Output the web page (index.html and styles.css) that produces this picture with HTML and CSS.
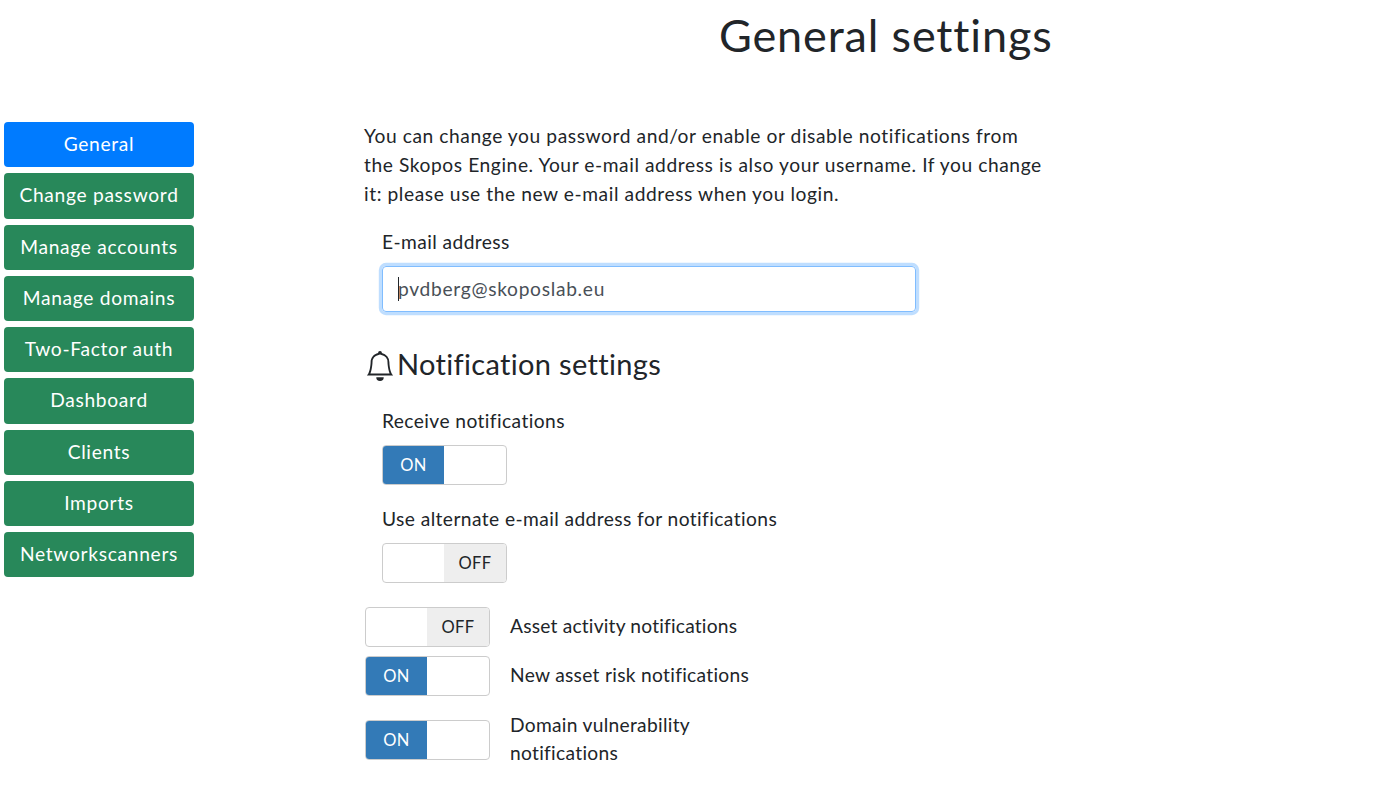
FILE: index.html
```html
<!DOCTYPE html>
<html lang="en">
<head>
    <meta charset="UTF-8">
    <meta name="viewport" content="width=device-width, initial-scale=1.0">
    <title>General settings</title>
    <link rel="stylesheet" href="styles.css">
</head>
<body>
    <h1 class="page-title">General settings</h1>
    <div class="layout">
        <nav class="side-nav">
            <a class="nav-btn active">General</a>
            <a class="nav-btn">Change password</a>
            <a class="nav-btn">Manage accounts</a>
            <a class="nav-btn">Manage domains</a>
            <a class="nav-btn">Two-Factor auth</a>
            <a class="nav-btn">Dashboard</a>
            <a class="nav-btn">Clients</a>
            <a class="nav-btn">Imports</a>
            <a class="nav-btn">Networkscanners</a>
        </nav>
        <main class="content">
            <p class="intro">You can change you password and/or enable or disable notifications from the Skopos Engine. Your e-mail address is also your username. If you change it: please use the new e-mail address when you login.</p>
            <div class="field">
                <label class="field-label">E-mail address</label>
                <div class="email-input"><span class="caret"></span>pvdberg@skoposlab.eu</div>
            </div>
            <h2 class="section-title">
                <svg class="bell" width="30" height="30" viewBox="0 0 16 16" fill="#212529">
                    <path d="M8 16a2 2 0 0 0 2-2H6a2 2 0 0 0 2 2z"/>
                    <path fill-rule="evenodd" d="M8 1.918l-.797.161A4.002 4.002 0 0 0 4 6c0 .628-.134 2.197-.459 3.742-.16.767-.376 1.566-.663 2.258h10.244c-.287-.692-.502-1.49-.663-2.258C12.134 8.197 12 6.628 12 6a4.002 4.002 0 0 0-3.203-3.92L8 1.917zM14.22 12c.223.447.481.801.78 1H1c.299-.199.557-.553.78-1C2.68 10.2 3 6.88 3 6c0-2.42 1.72-4.44 4.005-4.901a1 1 0 1 1 1.99 0A5.002 5.002 0 0 1 13 6c0 .88.32 4.2 1.22 6z"/>
                </svg>
                Notification settings
            </h2>
            <div class="field toggle-field first">
                <label class="field-label">Receive notifications</label>
                <div class="toggle"><span class="toggle-on">ON</span><span class="toggle-blank"></span></div>
            </div>
            <div class="field toggle-field second">
                <label class="field-label">Use alternate e-mail address for notifications</label>
                <div class="toggle"><span class="toggle-blank"></span><span class="toggle-off">OFF</span></div>
            </div>
            <div class="toggle-row row-asset">
                <div class="toggle"><span class="toggle-blank"></span><span class="toggle-off">OFF</span></div>
                <span class="row-label">Asset activity notifications</span>
            </div>
            <div class="toggle-row row-risk">
                <div class="toggle"><span class="toggle-on">ON</span><span class="toggle-blank"></span></div>
                <span class="row-label">New asset risk notifications</span>
            </div>
            <div class="toggle-row row-domain">
                <div class="toggle"><span class="toggle-on">ON</span><span class="toggle-blank"></span></div>
                <span class="row-label narrow">Domain vulnerability notifications</span>
            </div>
        </main>
    </div>
</body>
</html>
```

FILE: styles.css
```css
* {
    box-sizing: border-box;
}
body {
    font-family: 'Lato', 'Noto Sans', sans-serif;
    font-size: 19.2px;
    line-height: 29px;
    color: #212529;
    background: #fff;
    margin: 0;
}
.page-title {
    font-size: 45px;
    font-weight: 400;
    letter-spacing: 0.85px;
    line-height: 54px;
    margin: 0;
    padding: 8px 0 0 719px;
}
.layout {
    display: flex;
    margin-top: 60px;
    padding-left: 4px;
}
.side-nav {
    width: 190px;
    display: flex;
    flex-direction: column;
    gap: 6px;
    flex-shrink: 0;
}
.nav-btn {
    height: 45.25px;
    display: flex;
    align-items: center;
    justify-content: center;
    padding-bottom: 2px;
    background: #28885a;
    color: #fff;
    letter-spacing: 0.7px;
    border-radius: 4px;
}
.nav-btn.active {
    background: #007bff;
}
.content {
    margin-left: 170px;
    width: 680px;
    margin-top: -1px;
}
.intro {
    margin: 0;
    letter-spacing: 0.58px;
}
.field {
    margin: 19px 0 0 18px;
    letter-spacing: 0.42px;
}
.field-label {
    display: block;
    margin-bottom: 10px;
    line-height: 29px;
}
.email-input {
    width: 534px;
    height: 46px;
    border: 1px solid #80bdff;
    border-radius: 4px;
    box-shadow: 0 0 0 3.2px #bfdeff;
    padding: 0 15px;
    line-height: 44px;
    color: #495057;
    letter-spacing: 0.7px;
    position: relative;
}
.caret {
    position: absolute;
    left: 15px;
    top: 10px;
    width: 1px;
    height: 24px;
    background: #212529;
}
.section-title {
    display: flex;
    align-items: center;
    gap: 1px;
    font-size: 29px;
    font-weight: 400;
    letter-spacing: 0.33px;
    line-height: 35px;
    margin: 34px 0 0;
}
.bell {
    flex-shrink: 0;
    margin: 5px 1px 0;
}
.toggle {
    width: 125px;
    height: 40px;
    display: flex;
    border: 1px solid #ccc;
    border-radius: 4px;
    overflow: hidden;
    flex-shrink: 0;
    font-size: 16.5px;
    letter-spacing: 0.4px;
}
.toggle span {
    display: flex;
    align-items: center;
    justify-content: center;
    padding-top: 1px;
}
.toggle-blank {
    width: 61px;
}
.toggle-on {
    width: 61px;
    background: #337ab7;
    color: #fff;
}
.toggle-off {
    width: 62px;
    background: #eee;
    color: #212529;
}
.toggle-field.first {
    margin-top: 25px;
}
.toggle-field.second {
    margin-top: 19px;
}
.toggle-row {
    display: flex;
    align-items: center;
    gap: 20px;
    margin-left: 1px;
}
.row-label {
    letter-spacing: 0.3px;
    padding-bottom: 4px;
}
.row-asset {
    margin-top: 24px;
}
.row-asset .row-label {
    letter-spacing: 0.2px;
}
.row-risk {
    margin-top: 9px;
}
.row-domain {
    margin-top: 15px;
}
.row-label.narrow {
    width: 230px;
    line-height: 28px;
    padding-bottom: 2px;
}
```
